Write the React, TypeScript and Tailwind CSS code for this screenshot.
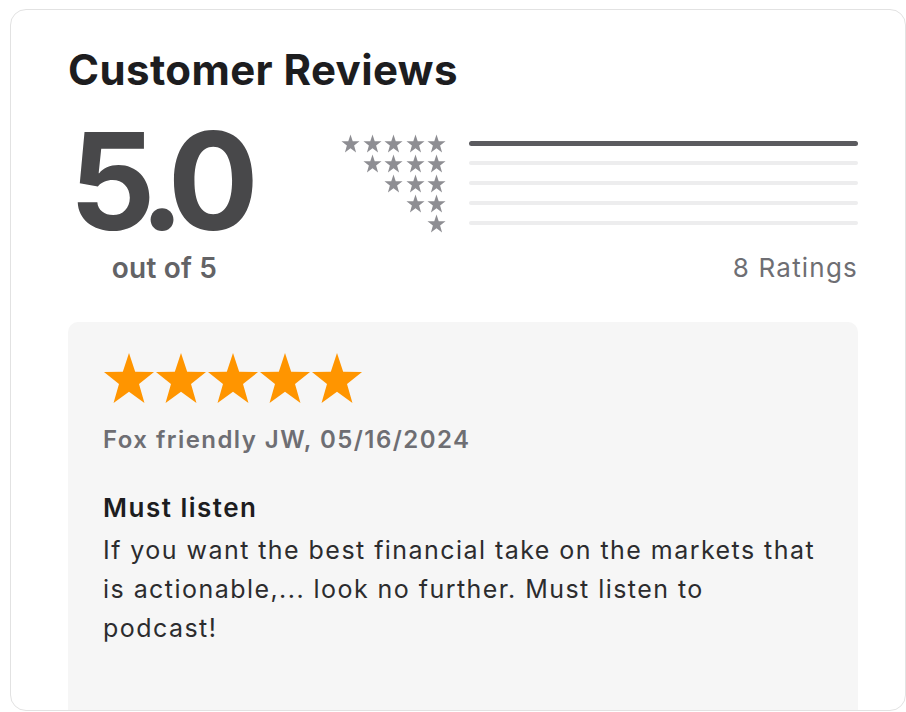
import React from "react";

function starPoints(cx: number, cy: number, rx: number, ry: number, ratio: number) {
  const pts: string[] = [];
  for (let i = 0; i < 10; i++) {
    const a = (-90 + i * 36) * (Math.PI / 180);
    const f = i % 2 === 0 ? 1 : ratio;
    pts.push(`${(cx + Math.cos(a) * rx * f).toFixed(2)},${(cy + Math.sin(a) * ry * f).toFixed(2)}`);
  }
  return pts.join(" ");
}

const BIG_STAR = starPoints(26, 28.64, 26.3, 27.64, 0.4);
const SMALL_STAR = starPoints(9.5, 10.4, 9.5, 9.9, 0.4);

function BigStar() {
  return (
    <svg width="52" height="52" viewBox="0 0 52 52" className="block">
      <polygon points={BIG_STAR} fill="#ff9500" />
    </svg>
  );
}

function SmallStar() {
  return (
    <svg width="19" height="19" viewBox="0 0 19 19" className="block">
      <polygon points={SMALL_STAR} fill="#8e8e93" />
    </svg>
  );
}

const rows = [
  { stars: 5, dark: true },
  { stars: 4, dark: false },
  { stars: 3, dark: false },
  { stars: 2, dark: false },
  { stars: 1, dark: false },
];

export default function App() {
  return (
    <div
      className="w-[906px] h-[712px] bg-white pt-[9px] pl-[10px]"
      style={{ fontFamily: "Inter, 'Liberation Sans', sans-serif" }}
    >
      <div className="w-[896px] h-[702px] border border-[#e2e2e2] rounded-[16px] overflow-hidden flex flex-col pl-[57px] pr-[47px] pt-[39px]">
        <h1 className="text-[42px] leading-none font-bold text-[#1d1d1f] tracking-[0.4px]">
          Customer Reviews
        </h1>

        <div className="flex mt-[22px]">
          <div className="w-[193px] flex flex-col items-center">
            <div className="text-[135px] leading-[128px] font-bold text-[#48484a] tracking-[-13px] pr-[14px] pt-[4px]">
              5.0
            </div>
            <div className="mt-[9px] text-[28px] leading-none font-semibold text-[#636366] tracking-[0.2px]">
              out of 5
            </div>
          </div>

          <div className="flex-1 flex flex-col pt-[20px] pl-[79px]">
            {rows.map((r, i) => (
              <div key={i} className="h-[20px] flex items-center">
                <div className="w-[106px] flex justify-end gap-[2.5px]">
                  {Array.from({ length: r.stars }).map((_, j) => (
                    <SmallStar key={j} />
                  ))}
                </div>
                <div
                  className={
                    r.dark
                      ? "ml-[23px] flex-1 h-[5px] rounded-full bg-[#5b5b5f]"
                      : "ml-[23px] flex-1 h-[4px] rounded-full bg-[#ededee]"
                  }
                />
              </div>
            ))}
            <div className="mt-[19px] text-right text-[26px] leading-[1.2] text-[#6e6e73] tracking-[1.2px]">
              8 Ratings
            </div>
          </div>
        </div>

        <div className="mt-[39px] flex-1 bg-[#f6f6f6] rounded-t-[10px] pl-[35px] pr-[30px] pt-[30px]">
          <div className="flex">
            {Array.from({ length: 5 }).map((_, j) => (
              <BigStar key={j} />
            ))}
          </div>
          <div className="mt-[22px] text-[24px] leading-[28px] font-semibold text-[#6e6e73] tracking-[1.45px]">
            Fox friendly JW, 05/16/2024
          </div>
          <div className="mt-[38px] text-[26px] leading-[31px] font-semibold text-[#1d1d1f] tracking-[1.5px]">
            Must listen
          </div>
          <div className="mt-[8px] max-w-[714px] text-[25px] leading-[39px] text-[#2c2c2e] tracking-[1.45px]">
            If you want the best financial take on the markets that is actionable,... look no further. Must listen to podcast!
          </div>
        </div>
      </div>
    </div>
  );
}
